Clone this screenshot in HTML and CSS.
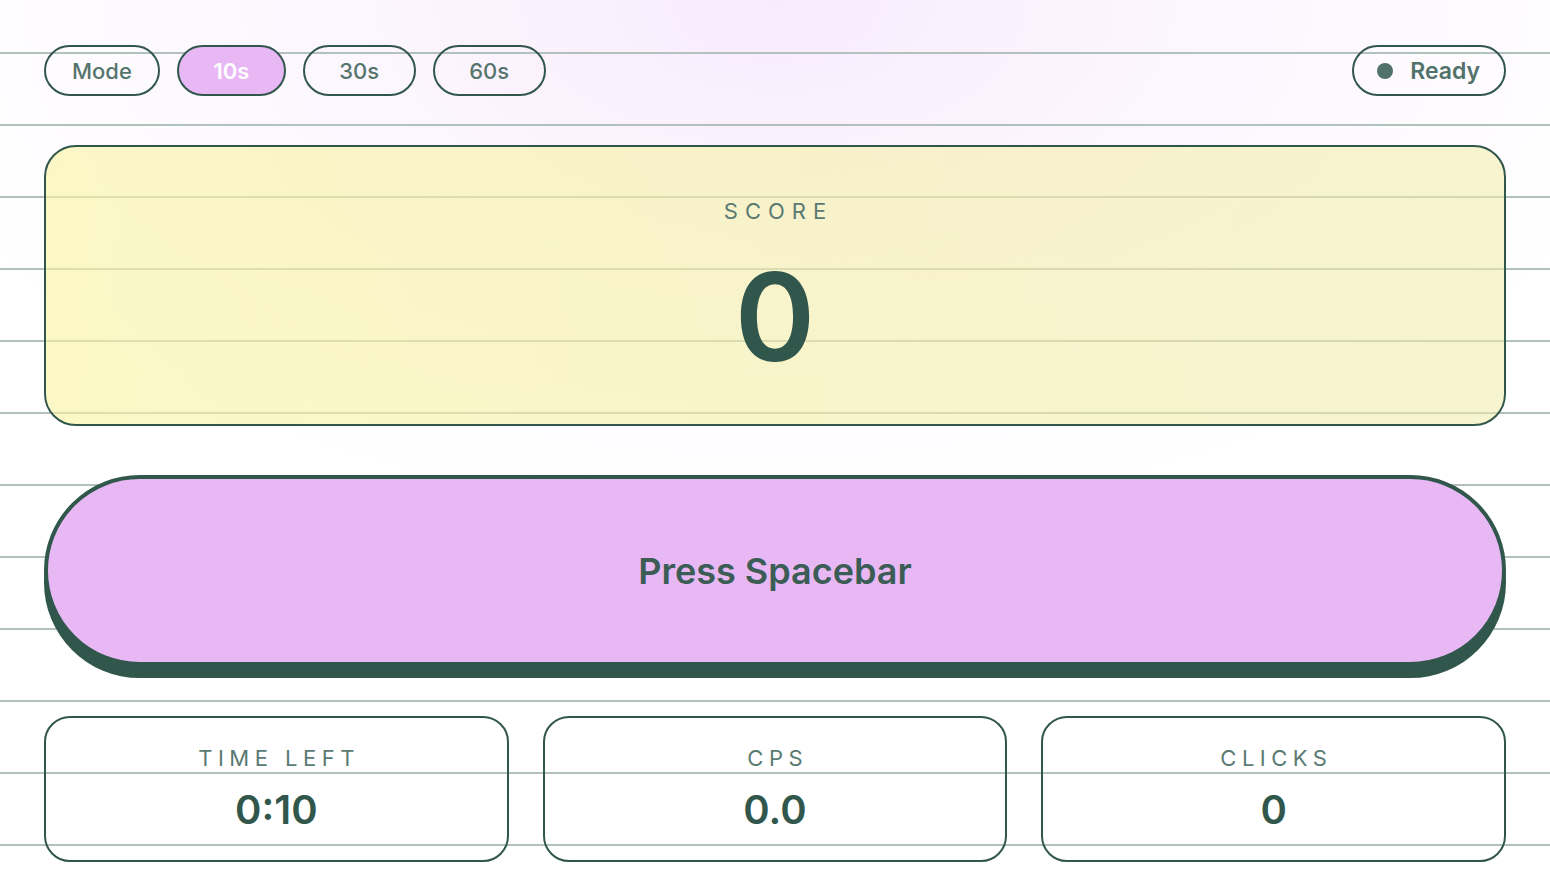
FILE: index.html
```html
<!DOCTYPE html>
<html lang="en">
<head>
    <meta charset="UTF-8">
    <meta name="viewport" content="width=device-width, initial-scale=1.0">
    <title>Click Speed Test</title>
    <link rel="stylesheet" href="styles.css">
</head>
<body>
    <div class="app">
        <div class="top-bar">
            <div class="modes">
                <button class="pill pill-mode">Mode</button>
                <button class="pill pill-time active">10s</button>
                <button class="pill pill-time">30s</button>
                <button class="pill pill-time">60s</button>
            </div>
            <div class="status"><span class="dot"></span>Ready</div>
        </div>

        <div class="score-card">
            <div class="label">SCORE</div>
            <div class="score" id="score">0</div>
        </div>

        <button class="press-btn" id="press">Press Spacebar</button>

        <div class="stats">
            <div class="stat">
                <div class="label">TIME LEFT</div>
                <div class="value" id="time-left">0:10</div>
            </div>
            <div class="stat">
                <div class="label">CPS</div>
                <div class="value" id="cps">0.0</div>
            </div>
            <div class="stat">
                <div class="label">CLICKS</div>
                <div class="value" id="clicks">0</div>
            </div>
        </div>
    </div>
</body>
</html>
```

FILE: styles.css
```css
* {
    box-sizing: border-box;
}
html, body {
    height: 100%;
}
body {
    margin: 0;
    font-family: Inter, "Noto Sans", sans-serif;
    color: #31574d;
    background-color: #ffffff;
    background-image:
        repeating-linear-gradient(to bottom, transparent 0, transparent 52px, #b3c1bc 52px, #b3c1bc 54px, transparent 54px, transparent 72px),
        radial-gradient(ellipse 900px 520px at 50% 0, #f8ebfd 0%, #fcf6fe 45%, rgba(255, 255, 255, 0) 100%);
}
.app {
    padding: 45px 44px 0;
}
.top-bar {
    display: flex;
    justify-content: space-between;
    align-items: center;
}
.modes {
    display: flex;
    gap: 17px;
}
.pill {
    height: 51px;
    border: 2px solid #31574d;
    border-radius: 26px;
    background: transparent;
    font-family: inherit;
    font-size: 22px;
    font-weight: 500;
    color: #56756d;
    padding: 0 26px;
    cursor: pointer;
}
.pill-time {
    padding: 0 34.5px;
}
.pill.active {
    background-color: #e8b8f5;
    color: #ffffff;
    font-weight: 600;
}
.status {
    display: flex;
    align-items: center;
    gap: 17px;
    height: 51px;
    padding: 0 24px 0 23px;
    border: 2px solid #31574d;
    border-radius: 26px;
    font-size: 23px;
    font-weight: 600;
    color: #52716a;
}
.dot {
    width: 16px;
    height: 16px;
    border-radius: 50%;
    background-color: #52716a;
}
.score-card {
    margin-top: 49px;
    height: 281px;
    border: 2px solid #31574d;
    border-radius: 32px;
    background: linear-gradient(100deg, rgba(249, 244, 160, 0.6), rgba(240, 236, 168, 0.55));
    display: flex;
    flex-direction: column;
    align-items: center;
    padding-top: 51px;
}
.label {
    font-size: 22px;
    letter-spacing: 7px;
    color: #5a7a72;
    line-height: 26px;
    margin-right: -7px;
}
.score {
    font-size: 122px;
    font-weight: 600;
    line-height: 1;
    margin-top: 32px;
    color: #31574d;
}
.press-btn {
    display: block;
    width: 100%;
    margin-top: 49px;
    height: 191px;
    border: 4px solid #31574d;
    border-radius: 96px;
    background-color: #e8b8f5;
    box-shadow: 0 12px 0 #31574d;
    font-family: inherit;
    font-size: 36px;
    font-weight: 600;
    color: #3b5d55;
    cursor: pointer;
}
.stats {
    display: grid;
    grid-template-columns: repeat(3, 1fr);
    gap: 34px;
    margin-top: 50px;
}
.stat {
    height: 146px;
    border: 2px solid #31574d;
    border-radius: 26px;
    display: flex;
    flex-direction: column;
    align-items: center;
    padding-top: 27px;
}
.stat .label {
    letter-spacing: 5.5px;
    margin-right: -5.5px;
}
.value {
    font-size: 40px;
    font-weight: 600;
    line-height: 48px;
    margin-top: 15px;
    color: #31574d;
}
```
